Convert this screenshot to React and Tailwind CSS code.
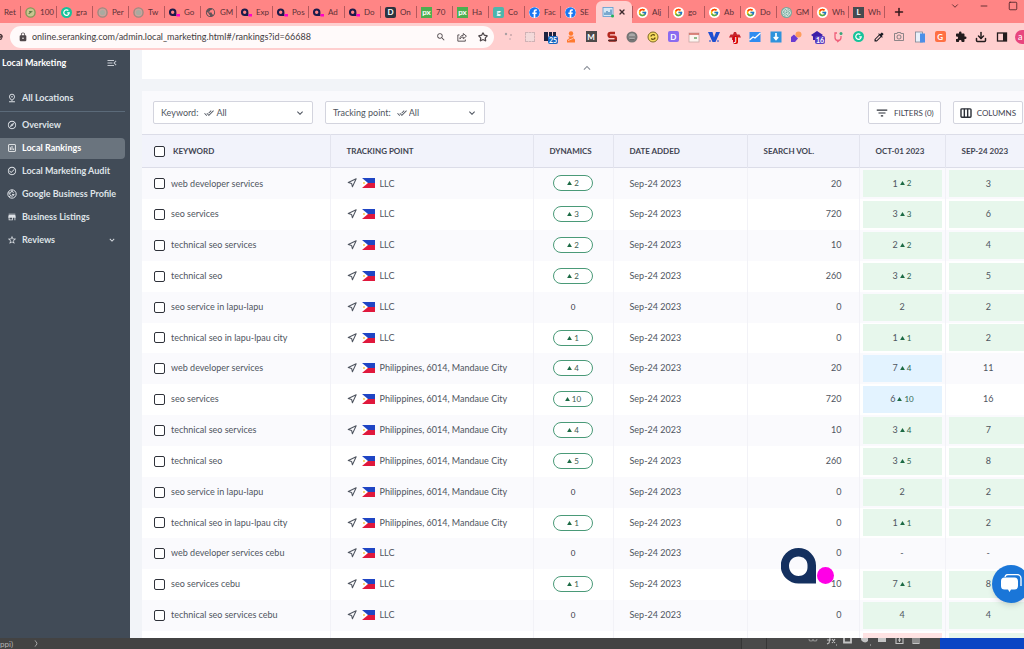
import {
  MdOutlinePinDrop,
  MdOutlineExplore,
  MdOutlineAssessment,
  MdCheckCircleOutline,
  MdStore,
  MdStarOutline,
  MdMenuOpen,
  MdDoneAll,
  MdFilterList,
  MdKeyboardArrowDown,
  MdKeyboardArrowUp,
  MdSearch,
  MdLock,
  MdExtension,
  MdColorize,
  MdOutlinePhotoCamera,
  MdPublic,
} from 'react-icons/md';
import { FcGoogle } from 'react-icons/fc';
import { FaFacebook } from 'react-icons/fa';
import { SiOpenai } from 'react-icons/si';
import { Star, Download, Plus, X, Minus, Square, ChevronDown, Navigation } from 'lucide-react';

const Tile = ({ className, children }) => (
  <span
    className={`flex h-[11px] w-[11px] shrink-0 items-center justify-center text-[8px] leading-none font-bold ${className}`}
  >
    {children}
  </span>
);

const BrandMark = ({ className }) => (
  <svg viewBox="0 0 54 37" className={className} aria-hidden="true">
    <path
      fillRule="evenodd"
      fill="#14305f"
      d="M17.5 0A17.5 17.5 0 0 1 35 17.5V35.5H17.5A17.7 17.7 0 0 1 17.5 0ZM17.5 8.5C12 8.5 8 12.600 8 18S12 28 17.500 28C22.500 28 26.500 24.500 26.500 19.500V17C26.500 12 22.500 8.500 17.500 8.500Z"
    />
    <circle cx="44.500" cy="27.500" r="8.500" fill="#ff00e6" />
  </svg>
);

const SmallBrand = () => (
  <svg viewBox="0 0 11 11" className="h-[11px] w-[11px] shrink-0" aria-hidden="true">
    <path
      fillRule="evenodd"
      fill="#1b1b4b"
      d="M3.700 1.500a3.700 3.700 0 0 1 3.700 3.700V9H3.700a3.700 3.700 0 0 1 0-7.500zM3.700 3.500a1.700 1.700 0 1 0 0 3.400 1.700 1.700 0 0 0 0-3.400z"
    />
    <rect x="7.500" y="7" width="3.500" height="2.500" fill="#ff00c8" />
  </svg>
);

const GrammarlyIcon = () => (
  <svg viewBox="0 0 12 12" className="h-[11px] w-[11px] shrink-0" aria-hidden="true">
    <circle cx="6" cy="6" r="6" fill="#15c39a" />
    <path d="M8 3.800A3 3 0 1 0 9 6.500H6.800" fill="none" stroke="#fff" strokeWidth="1.300" />
  </svg>
);

const GreyIcon = () => (
  <svg viewBox="0 0 12 12" className="h-[11px] w-[11px] shrink-0" aria-hidden="true">
    <circle cx="6" cy="6" r="5" fill="#c9a39c" stroke="#9c8a80" strokeWidth="1.500" />
    <circle cx="6" cy="6" r="2.800" fill="#a9aaa0" />
  </svg>
);

const GreenRing = () => (
  <svg viewBox="0 0 12 12" className="h-[11px] w-[11px] shrink-0" aria-hidden="true">
    <circle cx="6" cy="6" r="5" fill="#c9c490" stroke="#7f9a5a" strokeWidth="1.500" />
    <path d="M4 7.500 8 4.500M4.500 5h2" stroke="#5d7a46" strokeWidth="1.200" />
  </svg>
);

const RankIcon = () => (
  <svg viewBox="0 0 12 12" className="h-3 w-3 shrink-0" aria-hidden="true">
    <rect x="1" y="1.500" width="10" height="9" fill="#d5e8f5" stroke="#5b9bd0" strokeWidth="0.800" />
    <path d="M3 9V6.500M5 9V5M7 9V6M9 9V3.500" stroke="#3f7fb5" strokeWidth="1.200" />
    <circle cx="10.500" cy="10" r="1.500" fill="#20b15a" />
  </svg>
);

const gIcon = <FcGoogle className="h-[11px] w-[11px] shrink-0 rounded-full bg-white p-px" />;
const fbIcon = <FaFacebook className="h-[11px] w-[11px] shrink-0 rounded-full bg-white text-[#1877f2]" />;

const tabs = [
  { icon: <GreenRing />, title: '100' },
  { icon: <GrammarlyIcon />, title: 'gra' },
  { icon: <GreyIcon />, title: 'Per' },
  { icon: <GreyIcon />, title: 'Tw' },
  { icon: <SmallBrand />, title: 'Go' },
  { icon: <MdPublic className="h-[11px] w-[11px] shrink-0 text-[#5f5358]" />, title: 'GM' },
  { icon: <SmallBrand />, title: 'Exp' },
  { icon: <SmallBrand />, title: 'Pos' },
  { icon: <SmallBrand />, title: 'Ad' },
  { icon: <SmallBrand />, title: 'Do' },
  { icon: <Tile className="rounded-xs bg-[#2b3440] text-white">D</Tile>, title: 'On' },
  { icon: <Tile className="bg-[#4caf50] text-white">px</Tile>, title: '70' },
  { icon: <Tile className="bg-[#4caf50] text-white">px</Tile>, title: 'Ha' },
  { icon: <Tile className="rounded-xs bg-[#4db6ac] text-white">g</Tile>, title: 'Co' },
  { icon: fbIcon, title: 'Fac' },
  { icon: fbIcon, title: 'SE' },
  { icon: <RankIcon />, active: true },
  { icon: gIcon, title: 'Alj' },
  { icon: gIcon, title: 'go' },
  { icon: gIcon, title: 'Ab' },
  { icon: gIcon, title: 'Do' },
  { icon: <SiOpenai className="h-[11px] w-[11px] shrink-0 rounded-full bg-[#74aa9c] p-px text-white" />, title: 'GM' },
  { icon: gIcon, title: 'Wh' },
  { icon: <Tile className="bg-[#454b50] text-white">L</Tile>, title: 'Wh' },
];

const TabStrip = () => (
  <div className="flex h-[23px] items-end bg-[#ff8585] text-[8px] text-[#5c3036]">
    <button className="flex h-[22px] w-5 shrink-0 items-center pl-1">Ret</button>
    {tabs.map((tab, i) =>
      tab.active ? (
        <div key={i} className="flex h-[22px] w-9 shrink-0 items-center justify-between rounded-t-md bg-[#ffcfcf] px-1.5">
          {tab.icon}
          <button aria-label="Close tab">
            <X className="h-2 w-2 text-[#3c2a2e]" strokeWidth={4} />
          </button>
        </div>
      ) : (
        <button key={i} className="flex h-[22px] w-9 shrink-0 items-center">
          <span className="h-3 w-px shrink-0 bg-[#b5595d]" />
          <span className="flex items-center gap-1 pl-1 whitespace-nowrap">
            {tab.icon}
            {tab.title}
          </span>
        </button>
      )
    )}
    <div className="flex h-[22px] flex-1 items-center">
      <span className="h-3 w-px bg-[#b5595d]" />
      <button aria-label="New tab" className="ml-2">
        <Plus className="h-3 w-3 text-[#33171b]" strokeWidth={3} />
      </button>
    </div>
    <div className="flex h-[22px] items-start gap-[19px] pr-1.5 text-[#4a2328]">
      <button aria-label="Search tabs">
        <ChevronDown className="h-2.5 w-2.5" />
      </button>
      <button aria-label="Minimize">
        <Minus className="h-2.5 w-2.5" />
      </button>
      <button aria-label="Maximize">
        <Square className="h-2.5 w-2.5" />
      </button>
    </div>
  </div>
);

const Badge = ({ className, children }) => (
  <span className={`absolute top-[5px] left-1 rounded-xs px-px text-[7px] leading-[8px] font-bold text-white ${className}`}>
    {children}
  </span>
);

const extensions = [
  <svg viewBox="0 0 12 12" className="h-3 w-3">
    <circle cx="3" cy="3" r="1.200" fill="#a99fa3" />
    <circle cx="8" cy="4" r="1" fill="#c7a5a8" />
    <circle cx="7" cy="8" r="1" fill="#d5b5b8" />
  </svg>,
  <span className="h-2.5 w-2.5 border border-dashed border-[#cfb2b5] bg-[#f3dada]" />,
  <>
    <svg viewBox="0 0 12 12" className="h-3 w-3">
      <path d="M0 1h4v9H0zM5 1h3v4H5zM9 1h3v4H9z" fill="#1d2340" />
    </svg>
    <Badge className="bg-[#1565c0]">25</Badge>
  </>,
  <svg viewBox="0 0 12 12" className="h-3 w-3" fill="#ff7a2f">
    <circle cx="6" cy="2.500" r="2.200" />
    <path d="M3 5.500h6l-1 1.500 2 1.500v3H2V9l2.500-2z" />
    <path d="M3 9.500 8 7.500" stroke="#ffcfcf" strokeWidth="0.800" />
  </svg>,
  <Tile className="bg-[#4d4a4a] text-white">M</Tile>,
  <svg viewBox="0 0 12 12" className="h-3 w-3">
    <path d="M9 2H4.500a1.800 1.800 0 0 0 0 3.800H8a1.800 1.800 0 0 1 0 3.800H3" fill="none" stroke="#b3281e" strokeWidth="2.400" />
    <path d="M2 9.500h9" stroke="#5b2a2a" strokeWidth="1.500" />
  </svg>,
  <svg viewBox="0 0 12 12" className="h-3 w-3">
    <circle cx="6" cy="6" r="5.500" fill="#757575" />
    <circle cx="6" cy="5.500" r="3.300" fill="#a8a8a8" />
    <path d="M3 6h6M4 8.500h4" stroke="#666" strokeWidth="1" />
  </svg>,
  <svg viewBox="0 0 12 12" className="h-3 w-3">
    <circle cx="6" cy="6" r="5" fill="#f8dc62" stroke="#7d6a22" />
    <path d="M3.800 5.500a2.300 2.300 0 0 1 4-1M8.200 6.500a2.300 2.300 0 0 1-4 1" fill="none" stroke="#59490f" strokeWidth="1.200" />
  </svg>,
  <Tile className="rounded-xs bg-[#8b6cf0] text-white">D</Tile>,
  <svg viewBox="0 0 12 12" className="h-3 w-3">
    <rect x="1" y="2" width="10" height="9" fill="#fdf4f0" stroke="#c9a9a5" strokeWidth="0.800" />
    <path d="M1 3h10" stroke="#d0635a" strokeWidth="1.500" />
    <path d="M6 7h3" stroke="#6aa66a" strokeWidth="1.500" />
  </svg>,
  <svg viewBox="0 0 12 12" className="h-3 w-3">
    <path d="M0 1h4.500L6 6.500 8 1h4L7.500 11H4.500z" fill="#1f4fd0" />
    <path d="M1 10h2M9 10h2" stroke="#1f4fd0" />
  </svg>,
  <>
    <svg viewBox="0 0 12 12" className="h-3 w-3" fill="#c6232b">
      <path d="M0 6.500 1.500 3.500H4L5 1h2l1 2.500h2.500L12 6.500H8V9H3V6.500z" />
    </svg>
    <Badge className="bg-[#d50000]">J</Badge>
  </>,
  <svg viewBox="0 0 12 12" className="h-3 w-3">
    <rect x="0.500" y="1" width="11" height="10" fill="#2f8cf0" />
    <path d="M0.500 9 4 6l2 1 5.500-5" fill="none" stroke="#fff" strokeWidth="1.300" />
  </svg>,
  <svg viewBox="0 0 12 12" className="h-3 w-3">
    <rect x="0.500" y="0.500" width="11" height="11" fill="#2f93dc" />
    <path d="M6 2v6M3.800 6 6 8.500 8.200 6" fill="none" stroke="#fff" strokeWidth="1.700" />
  </svg>,
  <svg viewBox="0 0 12 12" className="h-3 w-3">
    <circle cx="8.500" cy="3.500" r="3" fill="#ff9d5c" />
    <path d="M1 6 4 3.500l4 4L5 11H1z" fill="#6a3bd1" />
  </svg>,
  <>
    <svg viewBox="0 0 12 12" className="h-3 w-3">
      <path d="M0 4 6 0l6 4-2 1.500V9H2V5.500z" fill="#3d1fa8" />
    </svg>
    <Badge className="bg-[#5a3fc0]">16</Badge>
  </>,
  <svg viewBox="0 0 12 12" className="h-3 w-3">
    <path d="M5 2H3v4.500a3 3 0 0 0 6 0V5M5 11l2-1" fill="none" stroke="#f0607b" strokeWidth="1.300" />
    <circle cx="9" cy="2.500" r="1.500" fill="#3aa57a" />
  </svg>,
  <GrammarlyIcon />,
  <MdColorize className="h-3 w-3 text-[#1c1c24]" />,
  <MdOutlinePhotoCamera className="h-3 w-3 text-[#8d8588]" />,
  <svg viewBox="0 0 12 12" className="h-3 w-3">
    <rect x="1.500" y="1" width="7" height="10" fill="#e9f1fa" stroke="#7d8794" strokeWidth="0.800" />
    <rect x="6" y="2.500" width="5" height="9" fill="#4c8fe8" />
  </svg>,
  <Tile className="rounded-xs bg-[#ff7043] text-white">G</Tile>,
  <MdExtension className="h-3 w-3 text-[#241c1e]" />,
  <Download className="h-3 w-3 text-[#241c1e]" strokeWidth={3} />,
  <svg viewBox="0 0 12 12" className="h-3 w-3">
    <rect x="1.500" y="2" width="9" height="8" fill="none" stroke="#241c1e" strokeWidth="1.300" />
    <path d="M7 2h3.500v8H7z" fill="#241c1e" />
  </svg>,
];

const AddressBar = () => (
  <div className="flex h-[27px] items-center overflow-hidden bg-[#ffcfcf]">
    <div className="w-2.5 shrink-0">
      <svg viewBox="0 0 4 8" className="h-2 w-1" aria-hidden="true">
        <path d="M0 1.500Q2.500 2 2 4H0M0 6.500l2-1" fill="none" stroke="#3b2a2d" strokeWidth="1.300" />
      </svg>
    </div>
    <div className="flex h-[22px] flex-1 items-center rounded-full bg-[#fffafa] pr-1.5 pl-2 text-[#4f484b]">
      <MdLock className="mr-1 h-2.5 w-2.5" />
      <input
        aria-label="Address"
        className="min-w-0 flex-1 text-[9px] text-[#3f3a3d] outline-none"
        defaultValue="online.seranking.com/admin.local_marketing.html#/rankings?id=66688"
      />
      <div className="flex items-center gap-[11px]">
        <MdSearch className="h-2.5 w-2.5" />
        <svg viewBox="0 0 12 12" className="h-2.5 w-2.5" fill="none" stroke="currentColor" strokeWidth="1.100">
          <path d="M3 3.500H1V11h9V9" />
          <path d="M3.500 8.500c0-3 1.500-4.500 4-4.500V1.800L11.300 5 7.500 8.200V6C5.500 6 4.500 6.800 3.500 8.500z" />
        </svg>
        <Star className="h-2.5 w-2.5" strokeWidth={3} />
      </div>
    </div>
    <div className="flex w-[530px] shrink-0 items-center">
      <div className="ml-[9px] flex flex-1 items-center justify-between">
        {extensions.map((icon, i) => (
          <button key={i} aria-label={`Extension ${i + 1}`} className="relative flex h-3 w-3 items-center justify-center">
            {icon}
          </button>
        ))}
      </div>
      <button aria-label="Profile" className="ml-[7px] flex h-3.5 w-[9px] items-center rounded-l-full bg-[#e8467f] pl-[3px] text-[9px] leading-none text-white">
        a
      </button>
    </div>
  </div>
);

const GoogleBadge = ({ className }) => (
  <svg viewBox="0 0 24 24" className={className} fill="none" stroke="currentColor" strokeWidth="2.400">
    <circle cx="12" cy="12" r="10" />
    <path d="M16 8.500A5.300 5.300 0 1 0 17 13h-5M12 2v5M3 9l5 1M5 19l4-3" />
  </svg>
);

const navItems = [
  { icon: MdOutlineExplore, label: 'Overview' },
  { icon: MdOutlineAssessment, label: 'Local Rankings', active: true },
  { icon: MdCheckCircleOutline, label: 'Local Marketing Audit' },
  { icon: GoogleBadge, label: 'Google Business Profile' },
  { icon: MdStore, label: 'Business Listings' },
  { icon: MdStarOutline, label: 'Reviews', expandable: true },
];

const Sidebar = () => (
  <aside className="w-[130px] shrink-0 bg-[#414b57] text-[9px] font-bold text-[#dfe3e8]">
    <div className="flex items-center justify-between py-1.5 pr-3 pl-0.5 text-white">
      <h1>Local Marketing</h1>
      <button aria-label="Collapse menu">
        <MdMenuOpen className="h-3 w-3 text-[#c5cad1]" />
      </button>
    </div>
    <div className="mr-[5px] border-b border-[#5b6a79] pt-3 pb-0.5">
      <a href="#locations" className="flex h-[21px] items-center gap-[5px] pl-[7px]">
        <MdOutlinePinDrop className="h-2.5 w-2.5" />
        All Locations
      </a>
    </div>
    <nav className="mt-[3px] mr-[5px] flex flex-col gap-0.5">
      {navItems.map(({ icon: Icon, label, active, expandable }) => (
        <a
          key={label}
          href={`#${label}`}
          className={`flex h-[21px] items-center gap-[5px] pl-[7px] pr-2 whitespace-nowrap ${
            active ? 'rounded-r bg-[#6a747e] text-white' : ''
          }`}
        >
          <Icon className="h-2.5 w-2.5 shrink-0" />
          {label}
          {expandable && <MdKeyboardArrowDown className="ml-auto h-2.5 w-2.5" />}
        </a>
      ))}
    </nav>
  </aside>
);

const FilterSelect = ({ id, label }) => (
  <div className="flex h-[23px] w-40 items-center rounded-xs border border-[#d3d4de] bg-white pr-1.5 pl-[7px]">
    <label htmlFor={id}>{label}</label>
    <MdDoneAll className="mr-0.5 ml-1.5 h-2.5 w-2.5" />
    <select id={id} className="flex-1 appearance-none outline-none">
      <option>All</option>
    </select>
    <MdKeyboardArrowDown className="h-3 w-3" />
  </div>
);

const toolbarButton =
  'flex h-[23px] items-center gap-[5px] rounded-xs border border-[#d3d4de] bg-white px-1.5 text-[8px] text-[#3f4450]';

const Toolbar = () => (
  <div className="flex h-[43px] items-center gap-3 bg-[#fafafd] pr-2 pl-[11px] text-[#4f5560]">
    <FilterSelect id="keyword" label="Keyword:" />
    <FilterSelect id="tracking-point" label="Tracking point:" />
    <button className={`ml-auto ${toolbarButton}`}>
      <MdFilterList className="h-3.5 w-3.5 text-[#2c3038]" />
      FILTERS (0)
    </button>
    <button className={toolbarButton}>
      <svg viewBox="0 0 14 12" className="h-2.5 w-3" fill="none" stroke="#2c3038" strokeWidth="1.700">
        <rect x="1" y="1" width="12" height="10" rx="1" />
        <path d="M5 1v10M9 1v10" />
      </svg>
      COLUMNS
    </button>
  </div>
);

const Flag = () => (
  <svg viewBox="0 0 13 10" className="h-2.5 w-[13px]" aria-hidden="true">
    <path d="M0 0h13v5H0z" fill="#1f45c4" />
    <path d="M0 5h13v5H0z" fill="#e0183c" />
    <path d="M0 0 6 5 0 10z" fill="#fff" />
    <circle cx="2" cy="5" r="0.900" fill="#f3c73b" />
  </svg>
);

const Up = () => (
  <svg viewBox="0 0 6 5" className="h-1 w-[5px]" aria-hidden="true">
    <path d="M3 0 6 5H0z" fill="#1c6a44" />
  </svg>
);

const LLC = 'LLC';
const CITY = 'Philippines, 6014, Mandaue City';

const rows = [
  ['web developer services', LLC, 2, 20, '1', 2, '3'],
  ['seo services', LLC, 3, 720, '3', 3, '6'],
  ['technical seo services', LLC, 2, 10, '2', 2, '4'],
  ['technical seo', LLC, 2, 260, '3', 2, '5'],
  ['seo service in lapu-lapu', LLC, 0, 0, '2', 0, '2'],
  ['technical seo in lapu-lpau city', LLC, 1, 0, '1', 1, '2'],
  ['web developer services', CITY, 4, 20, '7', 4, '11'],
  ['seo services', CITY, 10, 720, '6', 10, '16'],
  ['technical seo services', CITY, 4, 10, '3', 4, '7'],
  ['technical seo', CITY, 5, 260, '3', 5, '8'],
  ['seo service in lapu-lapu', CITY, 0, 0, '2', 0, '2'],
  ['technical seo in lapu-lpau city', CITY, 1, 0, '1', 1, '2'],
  ['web developer services cebu', LLC, 0, 0, '-', 0, '-'],
  ['seo services cebu', LLC, 1, 10, '7', 1, '8'],
  ['technical seo services cebu', LLC, 0, 0, '4', 0, '4'],
];

const rankColor = (rank, previous) => {
  if (rank === '-' || Number(rank) > 10) return '';
  if (Number(previous) > 10) return 'bg-[#e3f3ff]';
  return 'bg-[#e7f7ec]';
};

const Rank = ({ value, change, color }) => (
  <div className={`flex h-[27px] items-center justify-center gap-0.5 ${color}`}>
    {value}
    {change > 0 && (
      <>
        <Up />
        <span className="text-[8px] text-[#2f6550]">{change}</span>
      </>
    )}
  </div>
);

const checkbox =
  'block h-[11px] w-[11px] appearance-none rounded-xs border border-[#2f323a] bg-white checked:bg-[#3a3d45]';

const RankingsTable = () => (
  <table className="w-full table-fixed border-collapse">
    <colgroup>
      <col />
      <col className="w-[203px]" />
      <col className="w-20" />
      <col className="w-[134px]" />
      <col className="w-28" />
      <col className="w-[86px]" />
      <col className="w-[86px]" />
    </colgroup>
    <thead>
      <tr className="h-[33px] border-y border-[#dcdde8] bg-[#f2f3fb] text-left text-[8px] text-[#3f4450]">
        <th className="pl-3">
          <label className="flex items-center gap-2">
            <input type="checkbox" className={checkbox} />
            KEYWORD
          </label>
        </th>
        <th className="border-l border-[#e3e4ee] pl-4">TRACKING POINT</th>
        <th className="border-l border-[#e3e4ee] pl-4">DYNAMICS</th>
        <th className="border-l border-[#e3e4ee] pl-4">DATE ADDED</th>
        <th className="border-l border-[#e3e4ee] pl-4">SEARCH VOL.</th>
        <th className="border-l border-[#e3e4ee] pl-4">OCT-01 2023</th>
        <th className="border-l border-[#e3e4ee] pl-4">SEP-24 2023</th>
      </tr>
    </thead>
    <tbody>
      {rows.map(([keyword, point, dynamics, volume, rank, change, previous], i) => (
        <tr key={i} className="h-[31px] odd:bg-[#fafafd] nth-[6n]:h-[30px]">
          <td className="pl-3">
            <label className="flex items-center gap-1.5">
              <input type="checkbox" className={checkbox} />
              {keyword}
            </label>
          </td>
          <td className="border-l border-[#f2f2f7] pl-4">
            <span className="flex items-center gap-[5px]">
              <Navigation className="h-2.5 w-2.5" strokeWidth={2.5} />
              <Flag />
              {point}
            </span>
          </td>
          <td className="border-l border-[#f2f2f7] text-[8px]">
            {dynamics > 0 ? (
              <span className="mx-auto flex h-4 w-10 items-center justify-center gap-0.5 rounded-full border border-[#4a9a78] bg-white text-[#3b5b50]">
                <Up />
                {dynamics}
              </span>
            ) : (
              <span className="block text-center text-[#2f343d]">0</span>
            )}
          </td>
          <td className="border-l border-[#f2f2f7] pl-4">Sep-24 2023</td>
          <td className="border-l border-[#f2f2f7] pr-[17px] text-right">{volume}</td>
          <td className="border-l border-[#f2f2f7] px-[3px]">
            <Rank value={rank} change={change} color={rankColor(rank, previous)} />
          </td>
          <td className="border-l border-[#f2f2f7] px-[3px]">
            <Rank value={previous} color={rankColor(previous, previous)} />
          </td>
        </tr>
      ))}
      <tr className="align-top">
        <td />
        <td className="border-l border-[#f2f2f7]" />
        <td className="border-l border-[#f2f2f7]" />
        <td className="border-l border-[#f2f2f7]" />
        <td className="border-l border-[#f2f2f7]" />
        <td className="border-l border-[#f2f2f7] px-[3px] pt-0.5">
          <Rank color="bg-[#ffe3e3]" />
        </td>
        <td className="border-l border-[#f2f2f7] px-[3px] pt-0.5">
          <Rank color="bg-[#e7f7ec]" />
        </td>
      </tr>
    </tbody>
  </table>
);

const EditorBar = () => (
  <footer className="flex h-[11px] shrink-0 items-center overflow-hidden bg-[#434343] text-[8px] leading-none text-[#b4b4b4]">
    <span className="w-[34px] shrink-0">ppi)</span>
    <svg viewBox="0 0 4 8" className="h-[7px] w-1" fill="none" stroke="#b4b4b4">
      <path d="M0.500 0.500Q3 2 3 4T0.500 7.500" />
    </svg>
    <div className="ml-auto h-full w-[26px] border-x border-[#363636] bg-[#4a4a4a]" />
    <div className="flex h-full w-[173px] items-start bg-[#4a4a4a] pl-[41px]">
      <svg viewBox="0 0 112 8" className="h-2 w-28" fill="none" stroke="#c4c4c4" strokeWidth="1.100">
        <path d="M1 1a2 2 0 0 0 4 0M5 1a2 2 0 0 0 4 0" stroke="#8a8a8a" />
        <path d="M22 0l-1 5-2 1M19 2h4M24 1l3 4M27 1l-3 4M28 7h1" />
        <path d="M36 0v4.500h7V0" strokeWidth="1.800" />
        <path d="M53 0a4 4 0 0 0 7 3V0h-3z" fill="#c4c4c4" stroke="none" />
        <path d="M62 7h1" />
        <path d="M70 0h8v4h-8z" fill="#c4c4c4" stroke="none" />
        <path d="M88 0v5.500h7V0M90 2h3M91.500 0v4M105 0v5.500h6V0M107 0v5M109 0v5" />
      </svg>
    </div>
    <div className="h-full w-[84px] bg-[#0a45c4]" />
  </footer>
);

export default function App() {
  return (
    <div className="flex h-screen flex-col overflow-hidden font-['Lato','Noto_Sans',sans-serif] text-[9px]">
      <header className="shrink-0">
        <TabStrip />
        <AddressBar />
      </header>
      <div className="relative flex min-h-0 flex-1 overflow-hidden bg-[#f2f4f8]">
        <Sidebar />
        <main className="min-w-0 flex-1 overflow-hidden pl-3 text-[#4f5560]">
          <div className="w-full min-w-[889px]">
            <div className="flex h-[29px] items-end justify-center bg-white pb-1">
              <button aria-label="Collapse chart">
                <MdKeyboardArrowUp className="h-3.5 w-3.5 text-[#8a8f98]" />
              </button>
            </div>
            <div className="mt-3 bg-white">
              <Toolbar />
              <RankingsTable />
            </div>
          </div>
        </main>
        <BrandMark className="absolute right-[189px] bottom-[53px] h-[37px] w-[54px]" />
        <button
          aria-label="Open chat"
          className="absolute right-[-6px] bottom-[35px] flex h-[38px] w-[38px] items-center justify-center rounded-full bg-[#1a76d8] shadow-md"
        >
          <svg viewBox="0 0 22 20" className="h-5 w-[22px]">
            <path d="M5 3a3 3 0 0 1 3-2.500h9a4 4 0 0 1 4 4V12" fill="none" stroke="#fff" strokeWidth="1.300" />
            <path d="M4.500 3.500h10a3.500 3.500 0 0 1 3.500 3.500v5a3.500 3.500 0 0 1-3.500 3.500H11L9.500 18 8 15.500H4.500A3.500 3.500 0 0 1 1 12V7a3.500 3.500 0 0 1 3.500-3.500z" fill="#fff" />
          </svg>
        </button>
      </div>
      <EditorBar />
    </div>
  );
}
